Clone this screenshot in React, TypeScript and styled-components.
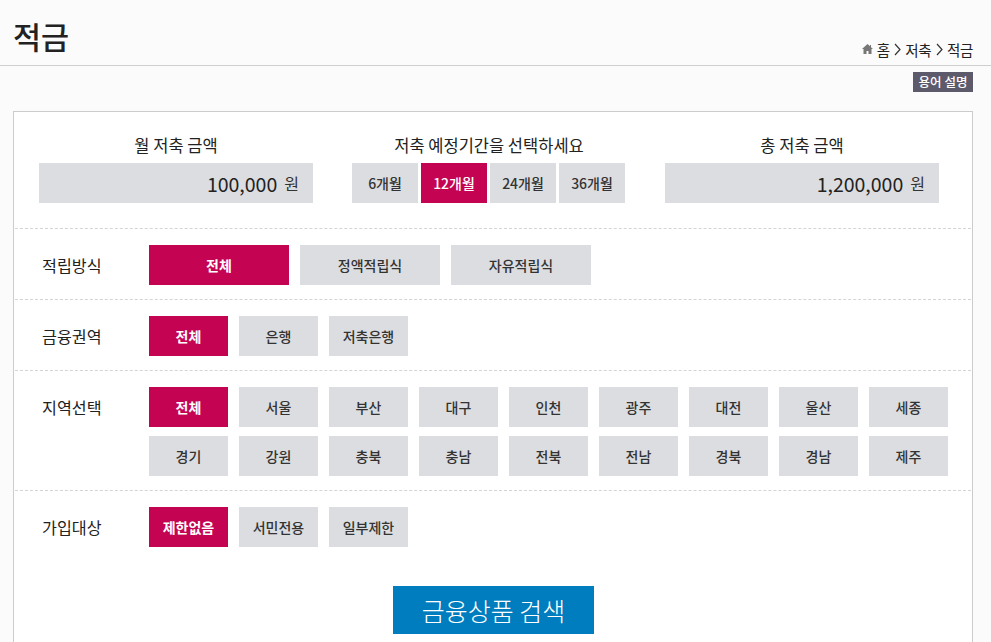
import React, { useState } from "react";
import styled, { createGlobalStyle } from "styled-components";

const GlobalStyle = createGlobalStyle`
  html, body {
    margin: 0;
    padding: 0;
    height: 642px;
    overflow: hidden;
    background: #fbfbfb;
    font-family: "Noto Sans CJK KR", "Noto Sans", sans-serif;
    color: #222;
  }
  * { box-sizing: border-box; }
`;

const Page = styled.div`
  height: 642px;
  overflow: hidden;
`;

const Header = styled.header`
  height: 66px;
  border-bottom: 1px solid #cfcfcf;
  padding: 0 18px 0 13px;
  display: flex;
  justify-content: space-between;
`;

const Title = styled.h1`
  margin: 0;
  padding-top: 12px;
  font-size: 30.5px;
  line-height: 48px;
  font-weight: 500;
  color: #222;
`;

const Crumbs = styled.div`
  display: flex;
  align-items: center;
  align-self: flex-end;
  height: 20px;
  margin-bottom: 6px;
  font-size: 14.5px;
  letter-spacing: -0.3px;
  color: #222;
`;

const Chevron = styled.svg`
  width: 7px;
  height: 13px;
  margin: 0 4.25px;
`;

const HomeIcon = styled.svg`
  width: 11px;
  height: 10px;
  margin-right: 4px;
`;

const TagRow = styled.div`
  display: flex;
  justify-content: flex-end;
  padding: 6px 18px 0 0;
  height: 45px;
`;

const Tag = styled.span`
  width: 60px;
  height: 20px;
  background: #5d5a6b;
  color: #fff;
  font-size: 12.5px;
  font-weight: 500;
  line-height: 20px;
  text-align: center;
`;

const Panel = styled.section`
  width: 960px;
  margin-left: 13px;
  background: #fff;
  border: 1px solid #ccc;
  padding: 0 1px 10px;
`;

const SummaryRow = styled.div`
  display: grid;
  grid-template-columns: repeat(3, 274px);
  column-gap: 39px;
  padding: 21px 0 25px 24px;
  height: 116px;
`;

const SummaryLabel = styled.div`
  height: 30px;
  font-size: 16.5px;
  line-height: 24px;
  color: #222;
  text-align: center;
`;

const AmountBox = styled.div`
  height: 40px;
  background: #dcdde0;
  display: flex;
  align-items: center;
  justify-content: flex-end;
  padding-right: 14px;
  gap: 7px;
`;

const Amount = styled.span`
  font-size: 19.5px;
  color: #222;
`;

const Unit = styled.span`
  font-size: 16px;
  color: #333;
`;

const Months = styled.div`
  display: flex;
  gap: 3px;
`;

const Row = styled.div`
  display: flex;
  border-top: 1px dashed #d4d4d4;
  padding: 16px 0 14px 27px;
`;

const RowLabel = styled.div`
  width: 107px;
  height: 40px;
  flex: none;
  font-size: 16.2px;
  line-height: 40px;
  color: #222;
`;

const Options = styled.div<{ $columns: number; $width: number }>`
  display: grid;
  grid-template-columns: repeat(${(p) => p.$columns}, ${(p) => p.$width}px);
  column-gap: 11px;
  row-gap: 9px;
`;

const Option = styled.button<{ $active?: boolean }>`
  height: 40px;
  padding: 0;
  border: 0;
  font-family: inherit;
  font-size: 14px;
  font-weight: ${(p) => (p.$active ? 700 : 500)};
  background: ${(p) => (p.$active ? "#c40452" : "#dcdde0")};
  color: ${(p) => (p.$active ? "#fff" : "#333")};
  cursor: pointer;
`;

const MonthOption = styled(Option)`
  width: 66px;
  font-weight: 500;
`;

const SearchWrap = styled.div`
  display: flex;
  justify-content: center;
  padding: 25px 0 0 1px;
`;

const SearchButton = styled.button`
  width: 201px;
  height: 48px;
  border: 0;
  background: #007dbe;
  color: #fff;
  font-family: inherit;
  font-size: 25px;
  font-weight: 300;
  cursor: pointer;
`;

const months = ["6개월", "12개월", "24개월", "36개월"];
const regions = [
  "전체", "서울", "부산", "대구", "인천", "광주", "대전", "울산", "세종",
  "경기", "강원", "충북", "충남", "전북", "전남", "경북", "경남", "제주",
];

const Sep = () => (
  <Chevron viewBox="0 0 7 13">
    <path d="M1 1l5 5.5L1 12" fill="none" stroke="#333" strokeWidth="1.2" />
  </Chevron>
);

export default function App() {
  const [month, setMonth] = useState("12개월");

  return (
    <Page>
      <GlobalStyle />
      <Header>
        <Title>적금</Title>
        <Crumbs>
          <HomeIcon viewBox="0 0 11 10">
            <path d="M5.5 0L0 5h1.5v5h3V7h2v3h3V5H11L9 3.2V1H8v1.3z" fill="#777" />
          </HomeIcon>
          홈<Sep />저축<Sep />적금
        </Crumbs>
      </Header>
      <TagRow>
        <Tag>용어 설명</Tag>
      </TagRow>
      <Panel>
        <SummaryRow>
          <div>
            <SummaryLabel>월 저축 금액</SummaryLabel>
            <AmountBox>
              <Amount>100,000</Amount>
              <Unit>원</Unit>
            </AmountBox>
          </div>
          <div>
            <SummaryLabel>저축 예정기간을 선택하세요</SummaryLabel>
            <Months>
              {months.map((m) => (
                <MonthOption key={m} $active={m === month} onClick={() => setMonth(m)}>
                  {m}
                </MonthOption>
              ))}
            </Months>
          </div>
          <div>
            <SummaryLabel>총 저축 금액</SummaryLabel>
            <AmountBox>
              <Amount>1,200,000</Amount>
              <Unit>원</Unit>
            </AmountBox>
          </div>
        </SummaryRow>
        <Row>
          <RowLabel>적립방식</RowLabel>
          <Options $columns={3} $width={140}>
            <Option $active>전체</Option>
            <Option>정액적립식</Option>
            <Option>자유적립식</Option>
          </Options>
        </Row>
        <Row>
          <RowLabel>금융권역</RowLabel>
          <Options $columns={3} $width={79}>
            <Option $active>전체</Option>
            <Option>은행</Option>
            <Option>저축은행</Option>
          </Options>
        </Row>
        <Row>
          <RowLabel>지역선택</RowLabel>
          <Options $columns={9} $width={79}>
            {regions.map((r, i) => (
              <Option key={r} $active={i === 0}>
                {r}
              </Option>
            ))}
          </Options>
        </Row>
        <Row>
          <RowLabel>가입대상</RowLabel>
          <Options $columns={3} $width={79}>
            <Option $active>제한없음</Option>
            <Option>서민전용</Option>
            <Option>일부제한</Option>
          </Options>
        </Row>
        <SearchWrap>
          <SearchButton>금융상품 검색</SearchButton>
        </SearchWrap>
      </Panel>
    </Page>
  );
}
